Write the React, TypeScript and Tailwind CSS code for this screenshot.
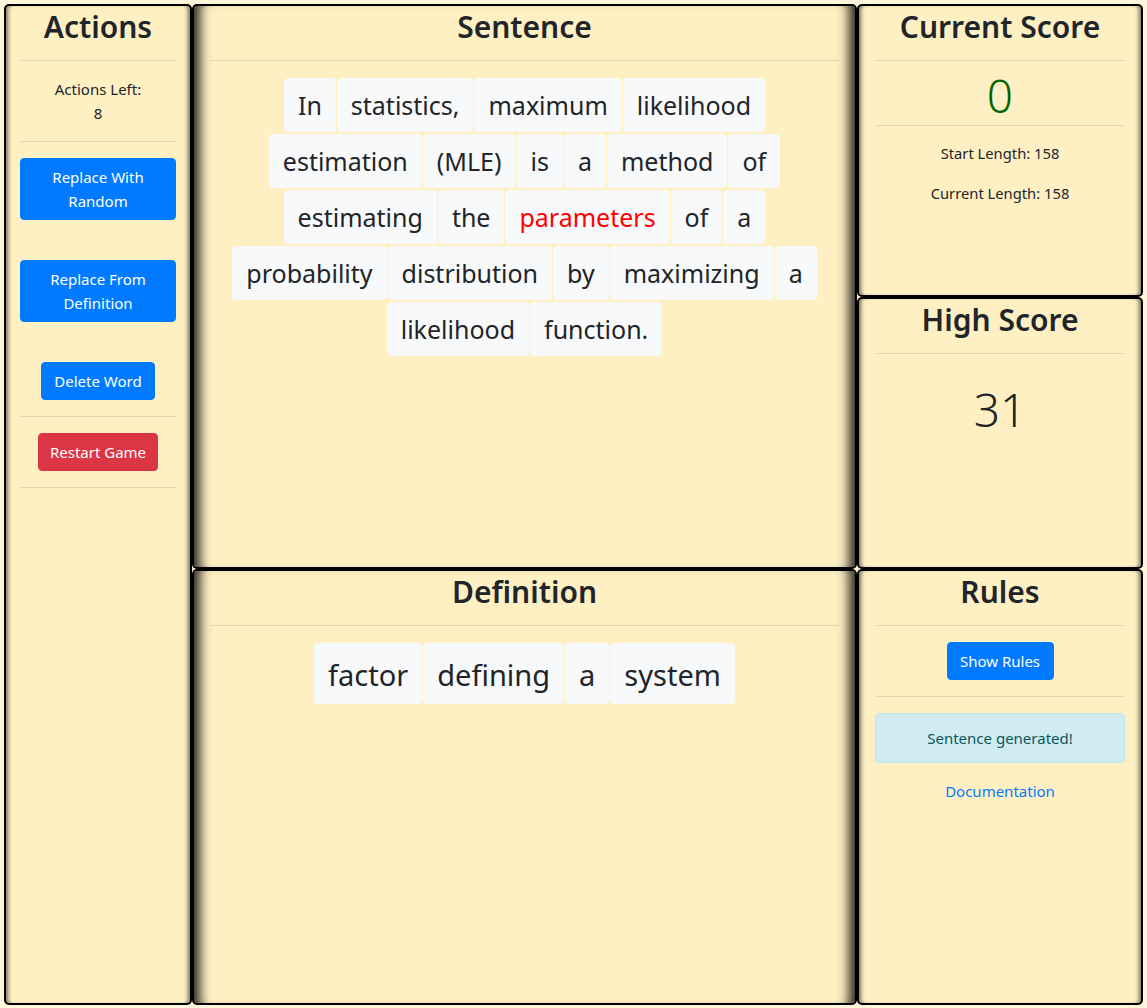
import React from "react";

const font = { fontFamily: '"Noto Sans", "Open Sans", Arial, sans-serif' };

const sentenceRows: { w: string; red?: boolean }[][] = [
  [{ w: "In" }, { w: "statistics," }, { w: "maximum" }, { w: "likelihood" }],
  [{ w: "estimation" }, { w: "(MLE)" }, { w: "is" }, { w: "a" }, { w: "method" }, { w: "of" }],
  [{ w: "estimating" }, { w: "the" }, { w: "parameters", red: true }, { w: "of" }, { w: "a" }],
  [{ w: "probability" }, { w: "distribution" }, { w: "by" }, { w: "maximizing" }, { w: "a" }],
  [{ w: "likelihood" }, { w: "function." }],
];

const definition = ["factor", "defining", "a", "system"];

function Hr() {
  return <div className="h-px w-full bg-[rgba(0,0,0,0.1)]" />;
}

function Heading({ children }: { children: React.ReactNode }) {
  return (
    <h2 className="text-center text-[30px] leading-[38px] font-semibold text-[#212529] pt-[2px] pb-[14px]">
      {children}
    </h2>
  );
}

const sideShadow =
  "shadow-[inset_5px_0_4px_-3px_rgba(0,0,0,0.55),inset_-5px_0_4px_-3px_rgba(0,0,0,0.55)]";
const midShadow =
  "shadow-[inset_16px_0_12px_-10px_rgba(0,0,0,0.85),inset_-16px_0_12px_-10px_rgba(0,0,0,0.85)]";

export default function App() {
  return (
    <div
      className="w-[1147px] h-[1008px] bg-[#fff6dc] px-[4px] pt-[4px] pb-[3px] flex text-[#212529]"
      style={font}
    >
      {/* Left column */}
      <div
        className={`w-[188px] shrink-0 h-full border-2 border-black rounded-[5px] bg-[#fff0c4] px-[14px] ${sideShadow}`}
      >
        <Heading>Actions</Heading>
        <Hr />
        <div className="py-[16px] text-center text-[15px] leading-[24px]">
          <div>Actions Left:</div>
          <div>8</div>
        </div>
        <Hr />
        <div className="pt-[16px] flex flex-col items-center">
          <button className="w-full rounded-[4px] bg-[#007bff] text-white text-[15px] leading-[24px] px-3 py-[6px] border border-[#007bff]">
            Replace With Random
          </button>
          <button className="mt-[40px] w-full rounded-[4px] bg-[#007bff] text-white text-[15px] leading-[24px] px-3 py-[6px] border border-[#007bff]">
            Replace From Definition
          </button>
          <button className="mt-[40px] w-[114px] rounded-[4px] bg-[#007bff] text-white text-[15px] leading-[24px] py-[6px] border border-[#007bff]">
            Delete Word
          </button>
        </div>
        <div className="mt-[16px]">
          <Hr />
        </div>
        <div className="py-[16px] flex justify-center">
          <button className="w-[120px] rounded-[4px] bg-[#dc3545] text-white text-[15px] leading-[24px] py-[6px] border border-[#dc3545]">
            Restart Game
          </button>
        </div>
        <Hr />
      </div>

      {/* Middle column */}
      <div className="w-[665px] shrink-0 h-full flex flex-col">
        <div
          className={`h-[565px] shrink-0 border-2 border-black rounded-[5px] bg-[#fff0c4] px-[16px] ${midShadow}`}
        >
          <Heading>Sentence</Heading>
          <Hr />
          <div className="pt-[17px] flex flex-col items-center gap-[2px]">
            {sentenceRows.map((row, i) => (
              <div key={i} className="flex justify-center gap-px">
                {row.map((word, j) => (
                  <span
                    key={j}
                    className={`rounded-[4px] bg-[#f8f9fa] border border-[#f8f9fa] px-[13px] py-[8px] text-[25px] leading-[36px] whitespace-nowrap ${
                      word.red ? "text-[#ff0000]" : "text-[#212529]"
                    }`}
                  >
                    {word.w}
                  </span>
                ))}
              </div>
            ))}
          </div>
        </div>
        <div
          className={`flex-1 border-2 border-black rounded-[5px] bg-[#fff0c4] px-[16px] ${midShadow}`}
        >
          <Heading>Definition</Heading>
          <Hr />
          <div className="pt-[17px] flex justify-center gap-px">
            {definition.map((w, i) => (
              <span
                key={i}
                className="rounded-[4px] bg-[#f8f9fa] border border-[#f8f9fa] px-[13px] pt-[9px] pb-[7px] text-[29px] leading-[43px] whitespace-nowrap text-[#212529]"
              >
                {w}
              </span>
            ))}
          </div>
        </div>
      </div>

      {/* Right column */}
      <div className="w-[286px] shrink-0 h-full flex flex-col">
        <div
          className={`h-[293px] shrink-0 border-2 border-black rounded-[5px] bg-[#fff0c4] px-[16px] ${sideShadow}`}
        >
          <Heading>Current Score</Heading>
          <Hr />
          <div className="h-[64px] pt-[4px] flex items-center justify-center text-[46px] leading-[56px] font-light text-[#006400]">
            0
          </div>
          <Hr />
          <div className="pt-[16px] text-center text-[14.75px] leading-[22px]">
            <div>Start Length: 158</div>
            <div className="mt-[18px]">Current Length: 158</div>
          </div>
        </div>
        <div
          className={`h-[272px] shrink-0 border-2 border-black rounded-[5px] bg-[#fff0c4] px-[16px] ${sideShadow}`}
        >
          <Heading>High Score</Heading>
          <Hr />
          <div className="pt-[27px] text-center text-[46px] leading-[56px] font-light">31</div>
        </div>
        <div
          className={`flex-1 border-2 border-black rounded-[5px] bg-[#fff0c4] px-[16px] ${sideShadow}`}
        >
          <Heading>Rules</Heading>
          <Hr />
          <div className="py-[16px] flex justify-center">
            <button className="w-[107px] rounded-[4px] bg-[#007bff] text-white text-[15px] leading-[24px] py-[6px] border border-[#007bff]">
              Show Rules
            </button>
          </div>
          <Hr />
          <div className="mt-[16px] rounded-[4px] bg-[#d1ecf1] border border-[#bee5eb] text-[#0c5460] text-center text-[15px] leading-[24px] py-[12px]">
            Sentence generated!
          </div>
          <div className="mt-[16px] text-center text-[15px] leading-[24px] text-[#007bff]">
            Documentation
          </div>
        </div>
      </div>
    </div>
  );
}
